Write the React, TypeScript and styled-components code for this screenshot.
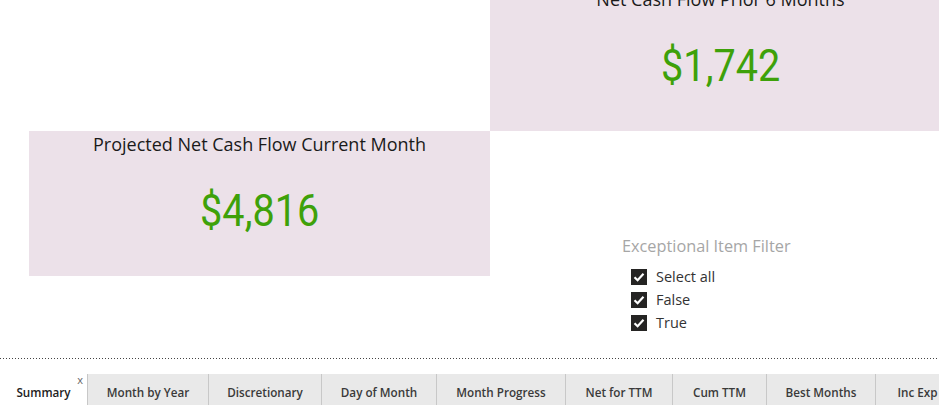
import React from "react";
import styled, { createGlobalStyle } from "styled-components";

const GlobalStyle = createGlobalStyle`
  html, body {
    margin: 0;
    padding: 0;
    background: #ffffff;
    overflow: hidden;
  }
  body {
    font-family: "Open Sans", "Noto Sans", sans-serif;
  }
`;

const Page = styled.div`
  width: 939px;
  height: 405px;
  display: flex;
  flex-direction: column;
  overflow: hidden;
`;

const Canvas = styled.div`
  height: 358px;
  display: grid;
  grid-template-columns: 29px 461px 1fr;
  grid-template-rows: 131px 145px 1fr;
`;

const Card = styled.div<{ $shift?: number }>`
  flex: 0 0 461px;
  width: 461px;
  background: #ece1e9;
  display: flex;
  flex-direction: column;
  align-items: center;
  margin-top: ${(p) => p.$shift ?? 0}px;
`;

const CardTitle = styled.div`
  font-family: "Open Sans", "Noto Sans", sans-serif;
  font-size: 18px;
  line-height: 26px;
  color: #1a1a1a;
  white-space: nowrap;
`;

const CardValue = styled.div`
  margin-top: 28px;
  font-family: Roboto, "DejaVu Sans Condensed", sans-serif;
  font-size: 45px;
  line-height: 52px;
  color: #3ea10a;
  transform: scaleX(0.88);
`;

const Cell = styled.div<{ $col: number; $row: number }>`
  grid-column: ${(p) => p.$col};
  grid-row: ${(p) => p.$row};
  overflow: hidden;
  display: flex;
`;

const Filter = styled.div`
  grid-column: 3;
  grid-row: 2 / span 2;
  padding: 104px 0 0 132px;
  display: flex;
  flex-direction: column;
`;

const FilterTitle = styled.div`
  font-size: 16.3px;
  line-height: 22px;
  color: #a6a6a6;
  margin-bottom: 8px;
`;

const Option = styled.label`
  display: flex;
  align-items: center;
  gap: 9px;
  height: 23px;
  padding-left: 9px;
  font-size: 14.5px;
  color: #333333;
`;

const Box = styled.span`
  width: 16px;
  height: 16px;
  background: #252423;
  display: flex;
  align-items: center;
  justify-content: center;
`;

const Divider = styled.div`
  height: 1px;
  background-image: linear-gradient(to right, #444 0 1px, transparent 1px 3px);
  background-size: 3px 1px;
  background-repeat: repeat-x;
`;

const TabBar = styled.div`
  margin-top: 15px;
  display: flex;
  height: 31px;
`;

const Tab = styled.div<{ $w: number; $active?: boolean }>`
  position: relative;
  flex: 0 0 ${(p) => p.$w}px;
  display: flex;
  align-items: center;
  justify-content: center;
  font-family: "Open Sans", "Noto Sans", sans-serif;
  font-size: 11.7px;
  font-weight: 600;
  color: ${(p) => (p.$active ? "#222" : "#3a3a3a")};
  background: ${(p) => (p.$active ? "#ffffff" : "#e9e9e9")};
  border-left: ${(p) => (p.$active ? "none" : "1px solid #c8c8c8")};
  box-sizing: border-box;
  padding-top: 4px;
  white-space: nowrap;
`;

const Close = styled.span`
  position: absolute;
  top: 0px;
  right: 4px;
  font-size: 11px;
  font-weight: 400;
  color: #666;
  line-height: 12px;
`;

const Check = () => (
  <svg width="12" height="12" viewBox="0 0 12 12">
    <path d="M1.5 6.2 L4.6 9.2 L10.5 2.8" fill="none" stroke="#fff" strokeWidth="2.2" />
  </svg>
);

const tabs: [string, number][] = [
  ["Month by Year", 121],
  ["Discretionary", 113],
  ["Day of Month", 115],
  ["Month Progress", 129],
  ["Net for TTM", 107],
  ["Cum TTM", 94],
  ["Best Months", 109],
  ["Inc Exp", 84],
];

export default function App() {
  return (
    <Page>
      <GlobalStyle />
      <Canvas>
        <Cell $col={3} $row={1}>
          <Card $shift={-14}>
            <CardTitle>Net Cash Flow Prior 6 Months</CardTitle>
            <CardValue>$1,742</CardValue>
          </Card>
        </Cell>
        <Cell $col={2} $row={2}>
          <Card>
            <CardTitle>Projected Net Cash Flow Current Month</CardTitle>
            <CardValue>$4,816</CardValue>
          </Card>
        </Cell>
        <Filter>
          <FilterTitle>Exceptional Item Filter</FilterTitle>
          {["Select all", "False", "True"].map((o) => (
            <Option key={o}>
              <Box>
                <Check />
              </Box>
              {o}
            </Option>
          ))}
        </Filter>
      </Canvas>
      <Divider />
      <TabBar>
        <Tab $w={87} $active>
          Summary
          <Close>x</Close>
        </Tab>
        {tabs.map(([t, w]) => (
          <Tab key={t} $w={w}>
            {t}
          </Tab>
        ))}
      </TabBar>
    </Page>
  );
}
